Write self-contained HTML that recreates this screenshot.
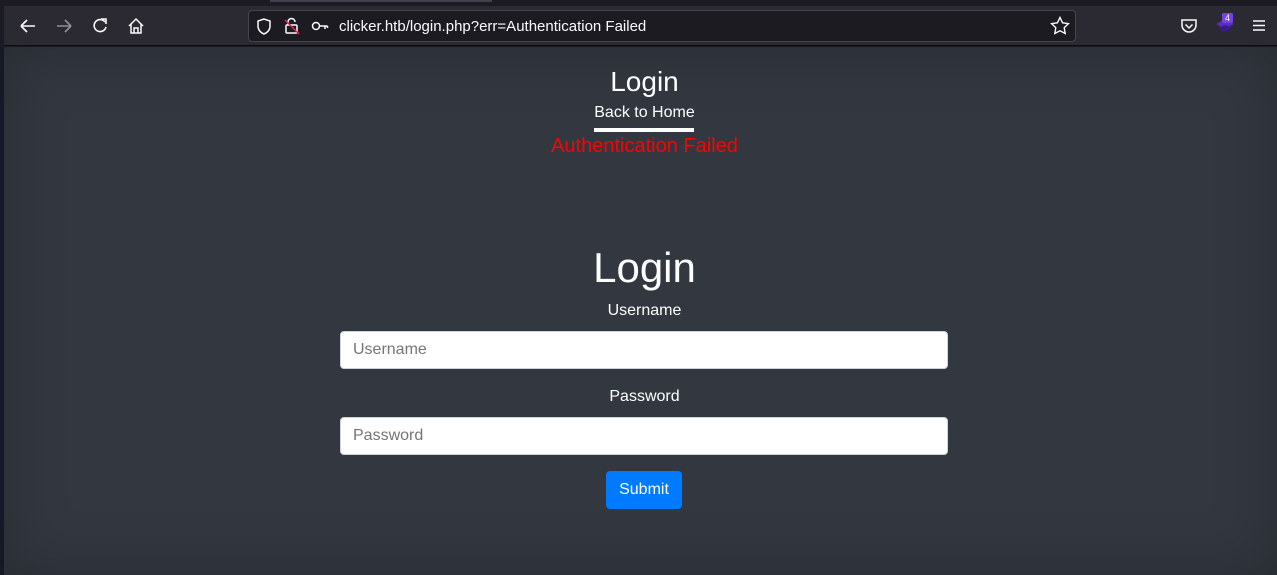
<!DOCTYPE html>
<html><head><style>
*{box-sizing:border-box;margin:0;padding:0}
body{width:1277px;height:575px;overflow:hidden;background:#1a1b26;font-family:"Liberation Sans",sans-serif;position:relative}
.tabs{position:absolute;left:0;top:0;width:1277px;height:6px;background:#1c1b22}
.tabs .t{position:absolute;left:270px;top:0;width:222px;height:2px;background:#42414d}
.tb{position:absolute;left:4px;top:6px;width:1273px;height:40px;background:#2b2a33;border-bottom:1px solid #0c0c0d}
.url{position:absolute;left:248px;top:10px;width:828px;height:32px;background:#1c1b22;border:1px solid #45444d;border-radius:4px}
.url span{position:absolute;left:90px;top:7px;color:#fbfbfe;font-size:15px}
.page{position:absolute;left:4px;top:47px;width:1273px;height:528px;background:#333840;box-shadow:inset 0 0 60px rgba(0,0,0,.25);color:#fff;text-align:center}
.side{position:absolute;left:0;top:47px;width:4px;height:528px;background:#151827}
input{position:absolute;left:336px;width:608px;height:38px;border:1px solid #ced4da;border-radius:4px;background:#fff;font:16px "Liberation Sans",sans-serif;padding:0 12px;color:#6c757d}
.lbl{position:absolute;left:4px;width:1273px;font-size:16px}
svg{position:absolute}
</style></head><body>
<div class="tabs"><div class="t"></div></div>
<div class="tb"></div>
<svg style="left:18px;top:17px" width="20" height="18" fill="none" stroke="#fbfbfe" stroke-width="1.6"><path d="M3 9h14M3 9l6-6M3 9l6 6"/></svg>
<svg style="left:54px;top:17px" width="20" height="18" fill="none" stroke="#8f8f9d" stroke-width="1.6"><path d="M3 9h14M17 9l-6-6M17 9l-6 6"/></svg>
<svg style="left:91px;top:17px" width="18" height="18" fill="none" stroke="#fbfbfe" stroke-width="1.6"><path d="M14 5A6 6 0 1 0 15 10"/><path d="M10 2h5v5"/></svg>
<svg style="left:127px;top:17px" width="18" height="18" fill="none" stroke="#fbfbfe" stroke-width="1.5"><path d="M2 9L9 2l7 7M4 7v9h10V7M7 16v-5h4v5"/></svg>
<div class="url"><span>clicker.htb/login.php?err=Authentication Failed</span></div>
<svg style="left:256px;top:18px" width="16" height="17" fill="none" stroke="#fbfbfe" stroke-width="1.5"><path d="M8 1L2 3v5c0 4 3 7 6 8 3-1 6-4 6-8V3z"/></svg>
<svg style="left:284px;top:17px" width="16" height="18" fill="none" stroke="#fbfbfe" stroke-width="1.5"><rect x="2" y="8" width="11" height="8" rx="1"/><path d="M4 8V5a3.5 3.5 0 0 1 7 0"/><path d="M1 3l14 14" stroke="#e22850"/></svg>
<svg style="left:311px;top:20px" width="18" height="12" fill="none" stroke="#fbfbfe" stroke-width="1.5"><circle cx="5" cy="6" r="3.5"/><path d="M8.5 6h8M14 6v3M16.5 6v2"/></svg>
<svg style="left:1050px;top:16px" width="20" height="19" fill="none" stroke="#fbfbfe" stroke-width="1.4"><path d="M10 1.5l2.6 5.3 5.8.8-4.2 4.1 1 5.8-5.2-2.7-5.2 2.7 1-5.8-4.2-4.1 5.8-.8z"/></svg>
<svg style="left:1180px;top:18px" width="18" height="16" fill="none" stroke="#fbfbfe" stroke-width="1.5"><path d="M2 2h14v5a7 7 0 0 1-14 0z"/><path d="M5.5 6.5L9 10l3.5-3.5"/></svg>
<svg style="left:1214px;top:12px" width="24" height="24"><path d="M2 12l9-5 9 5-9 5z" fill="#5a2cbc"/><path d="M4 16l7-3 7 3-7 4z" fill="#3b1a8f"/><rect x="8" y="1" width="11" height="10" rx="1.5" fill="#7542e5"/><text x="13.5" y="9" font-size="9" fill="#fff" text-anchor="middle" font-family="Liberation Sans">4</text></svg>
<svg style="left:1252px;top:19px" width="14" height="13" stroke="#fbfbfe" stroke-width="1.5"><path d="M1 2h12M1 6.5h12M1 11h12"/></svg>
<div class="side"></div>
<div class="page">
 <div class="lbl" style="top:19px;font-size:28px">Login</div>
 <div class="lbl" style="top:57px">Back to Home</div>
 <div style="position:absolute;left:590px;top:81px;width:100px;height:4px;background:#fff"></div>
 <div class="lbl" style="top:88px;font-size:20px;color:#f00">Authentication Failed</div>
 <div class="lbl" style="top:197px;font-size:42px">Login</div>
 <div class="lbl" style="top:255px">Username</div>
 <input style="top:284px" placeholder="Username">
 <div class="lbl" style="top:341px">Password</div>
 <input style="top:370px" placeholder="Password">
 <div style="position:absolute;left:602px;top:424px;width:76px;height:38px;background:#007bff;border-radius:4px;font-size:16px;line-height:38px">Submit</div>
</div>
</body></html>
